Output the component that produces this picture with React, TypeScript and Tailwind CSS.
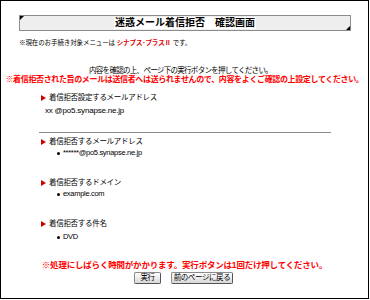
import React from "react";

const font = { fontFamily: '"Liberation Sans", "Noto Sans CJK JP", sans-serif' };

const Marker = () => (
    <svg width="5" height="6" viewBox="0 0 5 6" className="shrink-0">
        <polygon points="0,0 5,3 0,6" fill="#cc0000" />
    </svg>
);

const Bullet = () => <span className="inline-block w-[3px] h-[3px] rounded-full bg-black shrink-0" />;

const SectionHead = ({ label, className }: { label: string; className: string }) => (
    <div className={"flex items-center gap-[3px] pl-[40px] h-[10px] text-[7.5px] leading-[10px] tracking-[-0.3px] text-black " + className}>
        <Marker />
        <span>{label}</span>
    </div>
);

const BulletRow = ({ text, className }: { text: string; className: string }) => (
    <div className={"flex items-center gap-[3px] pl-[56px] h-[10px] text-[7.5px] leading-[10px] tracking-[-0.3px] text-black " + className}>
        <Bullet />
        <span>{text}</span>
    </div>
);

const Btn = ({ label, w }: { label: string; w: string }) => (
    <button
        type="button"
        className={
            "h-[12px] flex items-center justify-center rounded-[2px] border border-[#8a8a8a] border-r-[#555] border-b-[#555] bg-gradient-to-b from-white to-[#d8d8d8] text-[7.5px] leading-none tracking-[-0.4px] text-black " +
            w
        }
    >
        {label}
    </button>
);

export default function App() {
    return (
        <div style={font} className="w-[369px] h-[299px] border border-black bg-white overflow-hidden">
            {/* title bar */}
            <div className="relative mt-[14px] ml-[18px] w-[332px] h-[16px] border border-[#8c8c8c] bg-[#eeeeee] flex items-center justify-center">
                <span className="absolute top-0 left-0 w-0 h-0 border-t-[4px] border-r-[4px] border-t-black border-r-transparent" />
                <span className="absolute bottom-0 right-0 w-0 h-0 border-b-[4px] border-l-[4px] border-b-black border-l-transparent" />
                <span className="bg-white px-[1px] text-[10px] leading-[12px] font-bold text-black">迷惑メール着信拒否　確認画面</span>
            </div>

            <div className="mt-[7px] pl-[18px] h-[10px] text-[6.5px] leading-[10px] tracking-[-0.1px] text-black">
                ※現在のお手続き対象メニューは <span className="text-[#e00000] font-bold">シナプス･プラスⅡ</span> です。
            </div>

            <div className="mt-[18px] h-[9px] text-center text-[7.5px] leading-[9px] tracking-[-0.7px] text-black pr-[8px]">
                内容を確認の上、ページ下の実行ボタンを押してください。
            </div>
            <div className="h-[10px] text-center text-[8px] leading-[10px] tracking-[-0.36px] font-bold text-[#ff0000] whitespace-nowrap">
                ※着信拒否された旨のメールは送信者へは送られませんので、内容をよくご確認の上設定してください。
            </div>

            <SectionHead label="着信拒否設定するメールアドレス" className="mt-[8px]" />
            <div className="mt-[3px] pl-[44px] h-[10px] text-[8px] leading-[10px] tracking-[-0.2px] text-black">
                xx @po5.synapse.ne.jp
            </div>

            <div className="mt-[16px] ml-[38px] w-[292px] h-px bg-[#8a8a8a]" />

            <SectionHead label="着信拒否するメールアドレス" className="mt-[4px]" />
            <BulletRow text="******@po5.synapse.ne.jp" className="mt-[1px]" />

            <SectionHead label="着信拒否するドメイン" className="mt-[20px]" />
            <BulletRow text="example.com" className="mt-[1px]" />

            <SectionHead label="着信拒否する件名" className="mt-[20px]" />
            <BulletRow text="DVD" className="mt-[3px]" />

            <div className="mt-[18px] h-[10px] text-center text-[8.5px] leading-[10px] tracking-[-0.2px] font-bold text-[#ff0000] whitespace-nowrap">
                ※処理にしばらく時間がかかります。実行ボタンは1回だけ押してください。
            </div>

            <div className="mt-[2px] flex justify-center gap-[10px] pr-[2px]">
                <Btn label="実行" w="w-[27px]" />
                <Btn label="前のページに戻る" w="w-[62px]" />
            </div>
        </div>
    );
}
